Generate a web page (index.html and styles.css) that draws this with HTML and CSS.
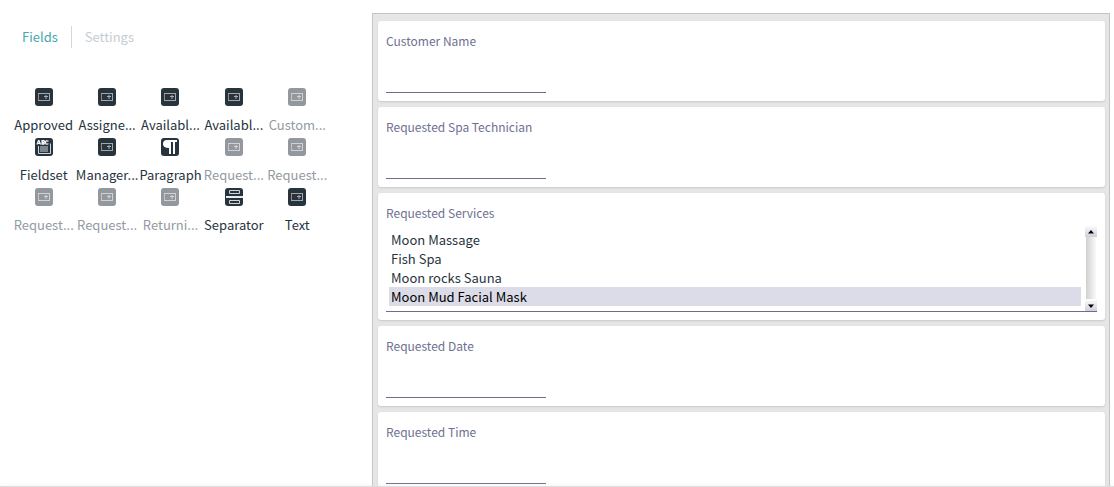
FILE: index.html
```html
<!DOCTYPE html>
<html lang="en">
<head>
<meta charset="utf-8">
<title>Form designer</title>
<link rel="stylesheet" href="styles.css">
</head>
<body>
<svg class="sprite" aria-hidden="true">
  <symbol id="text" viewBox="0 0 18 18">
    <rect width="18" height="18" rx="3" fill="#27333d"/>
    <rect x="3.500" y="5.500" width="11" height="7" fill="none" stroke="#a4a7aa"/>
    <path d="M3.500 6v6" stroke="#b08068"/>
    <path d="M9 8.500h4M11 7v4" stroke="#a9adb8" fill="none"/>
  </symbol>
  <symbol id="fieldset" viewBox="0 0 18 18">
    <rect width="18" height="18" rx="3" fill="#27333d"/>
    <path d="M2 6.500l1.500-4h.5l1.500 4M3 5.300h2M7 2.700h2q1 1 0 1.700H7q3.200.3 2 1.800H7zM13.500 3.200q-3-1.200-3 1.300t3 1.300" stroke="#fff" stroke-width="1.200" fill="none"/>
    <path d="M3.500 8v7.500h12V5.500M5 9h8M5 11h8M5 13h8" stroke="#d3d6d8" fill="none"/>
  </symbol>
  <symbol id="paragraph" viewBox="0 0 18 18">
    <rect width="18" height="18" rx="3" fill="#27333d"/>
    <path d="M16 2v2h-2v12h-2V4h-2v12H8v-6Q2 10 2 6t4-4z" fill="#fff"/>
  </symbol>
  <symbol id="separator" viewBox="0 0 18 18">
    <rect width="18" height="18" rx="3" fill="#27333d"/>
    <path d="M4.500 2.500h10v3h-10zM4.500 12.500h10v3h-10z" fill="none" stroke="#d3d6d8"/>
    <path d="M1 9h17" stroke="#e8eaeb" stroke-width="2"/>
  </symbol>
</svg>
<div class="workspace">
  <aside class="sidebar">
    <nav class="tabs">
      <a class="tab tab-active" href="#fields">Fields</a>
      <a class="tab" href="#settings">Settings</a>
    </nav>
    <div class="palette">
      <button class="field"><svg class="icon"><use href="#text"/></svg><span>Approved</span></button>
      <button class="field"><svg class="icon"><use href="#text"/></svg><span>Assigne...</span></button>
      <button class="field"><svg class="icon"><use href="#text"/></svg><span>Availabl...</span></button>
      <button class="field"><svg class="icon"><use href="#text"/></svg><span>Availabl...</span></button>
      <button class="field" disabled><svg class="icon"><use href="#text"/></svg><span>Custom...</span></button>
      <button class="field"><svg class="icon"><use href="#fieldset"/></svg><span>Fieldset</span></button>
      <button class="field"><svg class="icon"><use href="#text"/></svg><span>Manager...</span></button>
      <button class="field"><svg class="icon"><use href="#paragraph"/></svg><span>Paragraph</span></button>
      <button class="field" disabled><svg class="icon"><use href="#text"/></svg><span>Request...</span></button>
      <button class="field" disabled><svg class="icon"><use href="#text"/></svg><span>Request...</span></button>
      <button class="field" disabled><svg class="icon"><use href="#text"/></svg><span>Request...</span></button>
      <button class="field" disabled><svg class="icon"><use href="#text"/></svg><span>Request...</span></button>
      <button class="field" disabled><svg class="icon"><use href="#text"/></svg><span>Returni...</span></button>
      <button class="field"><svg class="icon"><use href="#separator"/></svg><span>Separator</span></button>
      <button class="field"><svg class="icon"><use href="#text"/></svg><span>Text</span></button>
    </div>
  </aside>
  <main class="canvas">
    <section class="card"><label for="customer">Customer Name</label><input id="customer" type="text"></section>
    <section class="card"><label for="technician">Requested Spa Technician</label><input id="technician" type="text"></section>
    <section class="card">
      <label for="services">Requested Services</label>
      <div class="listbox">
        <select id="services" multiple size="4">
          <option>Moon Massage</option>
          <option>Fish Spa</option>
          <option>Moon rocks Sauna</option>
          <option selected>Moon Mud Facial Mask</option>
        </select>
        <div class="scrollbar">
          <button class="arrow" aria-label="Scroll up"><svg viewBox="0 0 12 11"><path d="M3 7.500L6 4l3 3.500z"/></svg></button>
          <div class="track"></div>
          <button class="arrow" aria-label="Scroll down"><svg viewBox="0 0 12 11"><path d="M3 4.500L6 8l3-3.500z"/></svg></button>
        </div>
      </div>
    </section>
    <section class="card"><label for="date">Requested Date</label><input id="date" type="text"></section>
    <section class="card"><label for="time">Requested Time</label><input id="time" type="text"></section>
  </main>
</div>
<footer class="bottom-bar"></footer>
</body>
</html>
```
FILE: styles.css
```css
* { box-sizing: border-box; }

body {
  margin: 0;
  height: 100vh;
  display: flex;
  flex-direction: column;
  overflow: hidden;
  background: #fff;
  color: #27333d;
  font: 13px/20px "Noto Sans CJK SC", "Noto Sans", sans-serif;
}

button, input, select {
  margin: 0;
  padding: 0;
  border: 0;
  border-radius: 0;
  background: none;
  color: inherit;
  font: inherit;
}

.sprite { position: absolute; width: 0; height: 0; }

.workspace {
  flex: 1;
  min-height: 0;
  display: flex;
  overflow: hidden;
}

.sidebar { flex: 0 0 372px; padding: 26px 12px 0; }

.tabs { display: flex; padding-left: 10px; }

.tab { line-height: 22px; color: #c5cdd2; text-decoration: none; }

.tab-active {
  margin-right: 13px;
  padding-right: 13px;
  border-right: 1px solid #d5d8da;
  color: #43a9ad;
}

.palette {
  display: grid;
  grid-template-columns: repeat(5, 1fr);
  grid-auto-rows: 50px;
  margin: 40px 31px 0 0;
}

.field {
  display: flex;
  flex-direction: column;
  align-items: center;
  gap: 9px;
  white-space: nowrap;
}

.field:disabled { color: #939a9f; }
.field:disabled .icon { opacity: 0.5; }
.icon { flex: none; width: 18px; height: 18px; }

.canvas {
  flex: 1;
  align-self: flex-start;
  display: flex;
  flex-direction: column;
  gap: 6px;
  margin: 13px 4px 0 0;
  padding: 7px 4px 6px 5px;
  border: 1px solid #c4c4c4;
  background: #e6e6e6;
}

.card {
  padding: 10px 8px 8px;
  border-radius: 3px;
  background: #fff;
  box-shadow: 0 1px 2px #c8c8c8;
}

.card label {
  display: block;
  margin-bottom: 2px;
  color: #6e7092;
  font-size: 12px;
  line-height: 20px;
}

.card input {
  display: block;
  width: 160px;
  height: 40px;
  border-bottom: 1px solid #6b6c91;
}

.listbox { display: flex; height: 87px; border-bottom: 1px solid #6b6c91; }

.listbox select {
  flex: 1;
  height: 84px;
  padding: 5px 4px 3px 3px;
  overflow: hidden;
  outline: 0;
}

.listbox option {
  min-height: 19px;
  padding: 0 2px;
  line-height: 19px;
}

.listbox option:checked {
  background: #dcdce8 linear-gradient(#dcdce8, #dcdce8);
  color: #000;
}

.scrollbar { display: flex; flex-direction: column; width: 12px; }

.arrow {
  height: 12px;
  background: linear-gradient(#fff, #cfcfdd);
}

.arrow svg { display: block; width: 12px; height: 11px; }

.track {
  flex: 1;
  margin: 0 1px;
  background: linear-gradient(to right, #d0d0cd, #fafafa);
}

.bottom-bar {
  flex: none;
  height: 1px;
  background: #dedede;
  box-shadow: 0 0 4px #dedede;
}
```
